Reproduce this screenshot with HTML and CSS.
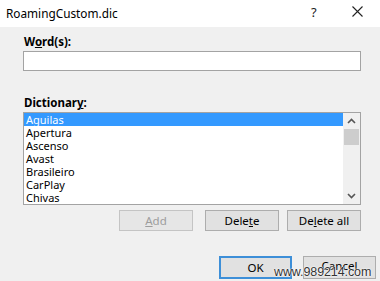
FILE: index.html
```html
<!DOCTYPE html>
<html>
<head>
<meta charset="utf-8">
<link rel="stylesheet" href="styles.css">
</head>
<body>
<div class="dialog">
  <div class="titlebar">
    <span class="title">RoamingCustom.dic</span>
    <span class="help">?</span>
    <span class="close"><svg width="11" height="11" viewBox="0 0 11 11"><path d="M0.5 0.5L10.5 10.5M10.5 0.5L0.5 10.5" stroke="#222" stroke-width="1.1" fill="none"/></svg></span>
  </div>
  <div class="content">
    <div class="label label-word">W<u>o</u>rd(s):</div>
    <div class="input"></div>
    <div class="label label-dict">Dictionar<u>y</u>:</div>
    <div class="list">
      <div class="rows">
        <div class="row selected">Aguilas</div>
        <div class="row">Apertura</div>
        <div class="row">Ascenso</div>
        <div class="row">Avast</div>
        <div class="row">Brasileiro</div>
        <div class="row">CarPlay</div>
        <div class="row">Chivas</div>
      </div>
      <div class="scrollbar">
        <svg class="arrow" width="9" height="6" viewBox="0 0 9 6"><path d="M1 5L4.5 1.5L8 5" stroke="#555" stroke-width="1.6" fill="none"/></svg>
        <div class="thumb"></div>
        <div class="track"></div>
        <svg class="arrow" width="9" height="6" viewBox="0 0 9 6"><path d="M1 1L4.5 4.5L8 1" stroke="#555" stroke-width="1.6" fill="none"/></svg>
      </div>
    </div>
    <div class="actions">
      <button class="btn disabled btn-add"><u>A</u>dd</button>
      <button class="btn btn-delete">Dele<u>t</u>e</button>
      <button class="btn btn-delall">De<u>l</u>ete all</button>
    </div>
  </div>
  <div class="footer">
    <button class="btn default">OK</button>
    <button class="btn btn-cancel">Cancel</button>
    <span class="watermark">www.989214.com</span>
  </div>
</div>
</body>
</html>
```
FILE: styles.css
```css
html, body {
  margin: 0;
  padding: 0;
}
body {
  width: 380px;
  height: 281px;
  overflow: hidden;
  background: #f0f0f0;
  font-family: "Noto Sans", "Open Sans", sans-serif;
  font-size: 11.5px;
  color: #000;
}
.dialog {
  position: relative;
  height: 281px;
}
.titlebar {
  height: 27px;
  background: #fff;
  display: flex;
  align-items: center;
}
.title {
  padding-left: 6px;
  font-size: 11.8px;
  flex: 1;
  margin-top: -2px;
}
.help {
  width: 10px;
  font-size: 13px;
  margin-right: 31px;
  margin-top: -4px;
  color: #222;
}
.close {
  width: 11px;
  height: 11px;
  margin-right: 17px;
  margin-top: -4px;
  display: flex;
}
.content {
  padding: 0 19px 0 23px;
}
.label {
  font-weight: bold;
  line-height: 14px;
  padding-left: 1px;
}
.label-word {
  margin-top: 8px;
  margin-bottom: 2px;
}
.label-dict {
  margin-top: 25px;
  margin-bottom: 2px;
}
.label u, .btn u {
  text-decoration-thickness: 1px;
  text-underline-offset: 1px;
}
.input {
  height: 18px;
  background: #fff;
  border: 1px solid #a3a3a3;
}
.list {
  height: 91px;
  border: 1px solid #a3a3a3;
  background: #fff;
  display: flex;
}
.rows {
  flex: 1;
}
.row {
  height: 13px;
  line-height: 13px;
  font-size: 11px;
  padding-left: 2px;
  white-space: nowrap;
}
.row.selected {
  background: #3399ff;
  color: #fff;
}
.scrollbar {
  width: 17px;
  background: #f0f0f0;
  display: flex;
  flex-direction: column;
  align-items: center;
}
.arrow {
  margin: 5px 0 5px;
  flex: none;
}
.thumb {
  width: 15px;
  height: 16px;
  background: #cdcdcd;
  flex: none;
}
.track {
  flex: 1;
}
.actions {
  display: flex;
  justify-content: flex-end;
  margin-top: 5px;
}
.btn {
  font-family: inherit;
  font-size: 11.5px;
  height: 21px;
  width: 74px;
  padding: 0;
  background: #e1e1e1;
  border: 1px solid #adadad;
  color: #000;
  line-height: 17px;
}
.btn.disabled {
  background: #e6e6e6;
  border-color: #c4c4c4;
  color: #9d9d9d;
}
.btn-delete {
  margin-left: 12px;
}
.btn-delall {
  margin-left: 8px;
}
.footer {
  display: flex;
  justify-content: flex-end;
  padding-right: 4px;
  margin-top: 25px;
}
.btn.default {
  height: 23px;
  width: 73px;
  border: 2px solid #3d8fd8;
  line-height: 17px;
}
.btn-cancel {
  margin-left: 11px;
  width: 73px;
  height: 23px;
  line-height: 15px;
  padding-bottom: 4px;
}
.watermark {
  position: absolute;
  left: 274px;
  top: 265px;
  font-family: "Liberation Sans", sans-serif;
  font-size: 12.5px;
  color: #333;
  text-shadow: 0 0 1px #fff, 0 0 1px #fff, 0 0 2px #fff;
  letter-spacing: -0.1px;
}
```
